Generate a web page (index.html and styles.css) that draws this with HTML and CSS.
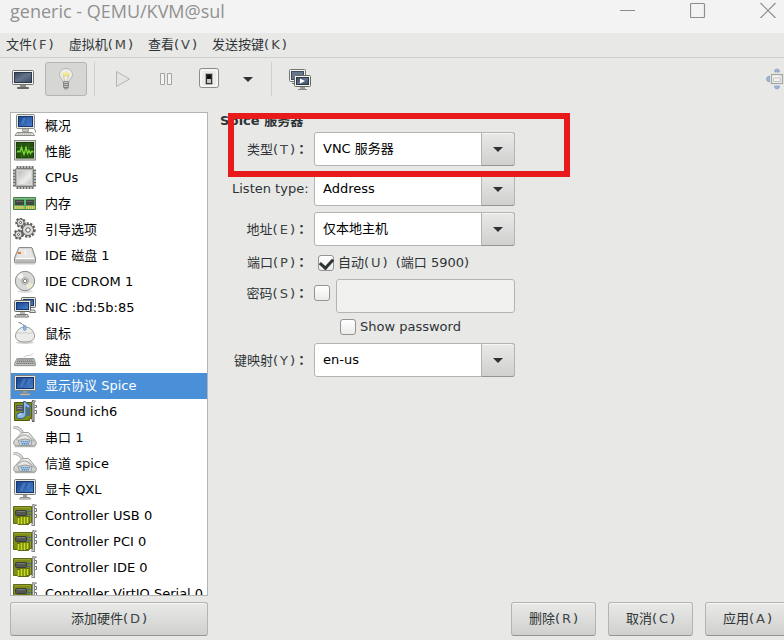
FILE: index.html
```html
<!DOCTYPE html>
<html lang="zh-CN">
  <head>
    <meta charset="UTF-8" />
    <meta name="viewport" content="width=device-width, initial-scale=1.0" />
    <title>generic - QEMU/KVM@sul</title>
    <link rel="stylesheet" href="styles.css">
  </head>
  <body>
    <!-- Icon definitions -->
    <svg class="defs" width="0" height="0" aria-hidden="true">
      <defs>
        <linearGradient id="blue" x1="0" y1="0" x2="1" y2="1">
          <stop offset="0" stop-color="#1d468c" />
          <stop offset="0.5" stop-color="#2f63b0" />
          <stop offset="1" stop-color="#4a80cc" />
        </linearGradient>
        <linearGradient id="slate" x1="0" y1="0" x2="1" y2="1">
          <stop offset="0" stop-color="#35455a" />
          <stop offset="0.5" stop-color="#63748c" />
          <stop offset="1" stop-color="#3a4960" />
        </linearGradient>
        <linearGradient id="metal" x1="0" y1="0" x2="1" y2="1">
          <stop offset="0" stop-color="#b9bab8" />
          <stop offset="0.6" stop-color="#ececea" />
          <stop offset="1" stop-color="#c4c5c3" />
        </linearGradient>
        <linearGradient id="shell" x1="0" y1="0" x2="0" y2="1">
          <stop offset="0" stop-color="#fafafa" />
          <stop offset="1" stop-color="#c9cac7" />
        </linearGradient>
        <symbol id="i-computer" viewBox="0 0 24 24">
          <rect x="3.500" y=".5" width="18" height="14" rx="1" fill="#e6e6e3" stroke="#8a8c86" />
          <rect x="5.500" y="2.500" width="14" height="10" fill="url(#blue)" stroke="#18366b" />
          <path d="M8 10l2-6h3l-3 6zM14 6l2-2-2 5z" fill="#6b9cdd" opacity=".45" />
          <path d="M9.500 15h6v2.500h-6z" fill="#c9cac7" stroke="#888a85" stroke-width=".7" />
          <path d="M4 18.500h15.500l2 3H2z" fill="#eeeeec" stroke="#8a8c86" />
          <path d="M4.500 20h14" stroke="#91938e" stroke-dasharray="1.500 .6" />
          <path d="M21 15.500q2.500 0 1.500 3" fill="none" stroke="#888a85" />
        </symbol>
        <symbol id="i-graph" viewBox="0 0 24 24">
          <rect x="1.500" y=".5" width="21" height="19.500" fill="#d3d7cf" stroke="#8b8e89" />
          <rect x="3.500" y="2.500" width="17" height="15.500" fill="#24520f" stroke="#1b3d0b" />
          <path d="M3 7.500h18M3 12.500h18M8.500 3v15M15.500 3v15" stroke="#376f1b" stroke-width=".8" />
          <path d="M4 11.500h3l1.500-4 2.500 7 2-7 1.500 6 1.500-3 1.500 3 1-2h2" fill="none" stroke="#79dc38" stroke-width="1.300" />
          <path d="M3 20.500h19" stroke="#bbb" />
        </symbol>
        <symbol id="i-cpu" viewBox="0 0 24 24">
          <path d="M3.500 1.500h17M3.500 21.500h17" stroke="#6f716d" stroke-width="3" stroke-dasharray="2 1" />
          <path d="M1.500 3.500v17M21.500 3.500v17" stroke="#6f716d" stroke-width="3" stroke-dasharray="2 1" />
          <rect x="2.500" y="2.500" width="18" height="18" rx="1" fill="#b4b5b2" stroke="#7b7d79" />
          <rect x="4.500" y="4.500" width="14" height="14" fill="url(#metal)" stroke="#d8d9d7" />
        </symbol>
        <symbol id="i-memory" viewBox="0 0 24 24">
          <path d="M.5 5.500h22v12H.5z" fill="#5c9e5e" stroke="#4a7f4f" />
          <path d="M1 6.500h21" stroke="#86b888" />
          <path d="M2 8h9v5H2zM13 8h8v5h-8z" fill="#42443f" />
          <path d="M3 9.500h7M14 9.500h6" stroke="#666864" />
          <path d="M12 6v7" stroke="#4ad065" stroke-width="1.500" />
          <path d="M1.500 15.500h10M13 15.500h9" stroke="#e7d85c" stroke-width="3" stroke-dasharray="1.400 .5" />
        </symbol>
        <symbol id="i-gears" viewBox="0 0 24 24">
          <g fill="none" stroke="#5f615d" stroke-dasharray="2.200 1.350">
            <circle cx="7.500" cy="4.500" r="4" stroke-width="2.500" />
            <circle cx="5.500" cy="16.500" r="4" stroke-width="2.500" />
            <circle cx="15" cy="12" r="6.500" stroke-width="2.500" />
          </g>
          <g fill="#dedfdc" stroke="#5f615d">
            <circle cx="7.500" cy="4.500" r="3.500" />
            <circle cx="5.500" cy="16.500" r="3.500" />
            <circle cx="15" cy="12" r="5.500" />
          </g>
          <g fill="#fff" stroke="#555753">
            <circle cx="7.500" cy="4.500" r="1" />
            <circle cx="5.500" cy="16.500" r="1" />
            <circle cx="15" cy="12" r="2.200" />
          </g>
        </symbol>
        <symbol id="i-disk" viewBox="0 0 24 24">
          <path d="M5.500 4q0-.5 1-.5h11.500q1 0 1.200.5L22.500 14v4q0 1-1 1h-19q-1 0-1-1v-4z" fill="#c8c9c6" stroke="#8b8d88" />
          <path d="M6.500 4.500h11.500L21 14H3z" fill="#e6e7e5" />
          <path d="M2.500 14.500h19" stroke="#fff" />
          <path d="M3 17h18" stroke="#a5a6a3" />
          <path d="M5 8h3v2H5z" fill="#e8782a" />
          <path d="M12 6l1 5" stroke="#fff" />
          <path d="M2 20h20" stroke="#ccc" />
        </symbol>
        <symbol id="i-cd" viewBox="0 0 24 24">
          <ellipse cx="12" cy="21.500" rx="8" ry="1.500" fill="#ddd" />
          <circle cx="12" cy="11" r="9.700" fill="#d9dad7" stroke="#8b8d88" />
          <path d="M12 11L4 7a9 9 0 0 1 5-4zM12 11l8 4a9 9 0 0 1-5 4z" fill="#f4f4f4" />
          <path d="M12 11l7 5-3 2z" fill="#efe7be" />
          <circle cx="12" cy="11" r="3.500" fill="#c6c7c4" stroke="#a0a29d" stroke-width=".7" />
          <circle cx="12" cy="11" r="1.700" fill="#fff" stroke="#858782" />
        </symbol>
        <symbol id="i-network" viewBox="0 0 24 24">
          <rect x="8.500" y="1.500" width="14" height="10" rx="1" fill="#e6e6e3" stroke="#666864" />
          <rect x="10.500" y="3.500" width="10" height="6" fill="url(#blue)" stroke="#18366b" />
          <path d="M17 12v2h4.500l1 2.500h-6" fill="#e6e6e3" stroke="#73756f" />
          <rect x="1.500" y="4.500" width="16" height="11" rx="1" fill="#e6e6e3" stroke="#666864" />
          <rect x="3.500" y="6.500" width="12" height="7" fill="url(#blue)" stroke="#18366b" />
          <path d="M7 16h5v2H7z" fill="#b5b6b3" />
          <path d="M3.500 18.500h11l1 2.500H1.500z" fill="#eeeeec" stroke="#73756f" />
          <path d="M4 19.700h9" stroke="#9a9c97" />
        </symbol>
        <symbol id="i-mouse" viewBox="0 0 24 24">
          <path d="M5.500 .5q3 .2 4 2 2.500 0 2.500 4" fill="none" stroke="#777975" />
          <ellipse cx="12" cy="20.500" rx="9" ry="1.500" fill="#d2d2d0" />
          <path d="M12 5c6 0 9.500 5 9.500 9 0 4-3.500 6-9.500 6s-9.500-2-9.500-6C2.500 10 6 5 12 5z" fill="#ebecea" stroke="#999b96" />
          <path d="M4 10.500q4 2 8 0 4 2 8 0" fill="none" stroke="#c5c6c3" stroke-width=".8" />
          <rect x="10.500" y="3.500" width="2.500" height="5" rx="1.200" fill="#8cb9eb" stroke="#5a8fcb" stroke-width=".7" />
        </symbol>
        <symbol id="i-keyboard" viewBox="0 0 24 24">
          <path d="M11 9.500c0-3 8-1 9-4" fill="none" stroke="#c9cac7" />
          <path d="M4 10.500h17l1.500 5v2H1.500v-2z" fill="#bfc0bd" stroke="#858782" stroke-width=".8" />
          <path d="M4.500 12h15.500M4 13.700h17M3.500 15.400h18" stroke="#6a6c68" stroke-dasharray="1.300 .6" />
          <path d="M2 17.700h20" stroke="#999b96" />
        </symbol>
        <symbol id="i-display" viewBox="0 0 24 24">
          <rect x="1.500" y="1.500" width="21" height="15" rx="1" fill="#e6e6e3" stroke="#7c7e78" />
          <rect x="3.500" y="3.500" width="17" height="11" fill="url(#blue)" stroke="#18366b" />
          <path d="M7 12l3-7h3l-4 8zM14 9l2-4h2l-3 6z" fill="#6b9cdd" opacity=".4" />
          <path d="M10 17h4v2h-4z" fill="#999b96" />
          <path d="M7.500 19.500h9l1 1.500h-11z" fill="#eeeeec" stroke="#8a8c86" />
        </symbol>
        <symbol id="i-card" viewBox="0 0 24 24">
          <path d="M.5 2.500h18v16h-3v2H5v-1H.5z" fill="#7f8c16" stroke="#5d681a" />
          <path d="M1.500 3.500h16v14" fill="none" stroke="#96a32a" />
          <path d="M4 12h13v8H4z" fill="#66720f" />
          <path d="M5.500 20v-6M8.500 20v-7M11.500 20v-7M14.500 19v-6" stroke="#c9dc20" stroke-width="1.800" />
          <rect x="2.500" y="6.500" width="11" height="5" rx="1" fill="#555753" stroke="#3a3c37" />
          <path d="M4 7.500h8" stroke="#7a7d75" />
          <path d="M14 7.500h4M14 10.500h4" stroke="#486b9a" stroke-width="1.500" />
          <path d="M23.500 .5h-1q-2 0-2 2v18h-2" fill="none" stroke="#858782" stroke-width="3" />
          <path d="M23.500 .5h-1q-2 0-2 2v18h-1.500" fill="none" stroke="#d3d7cf" />
          <path d="M22 4.500h1.500v3H22M22 10.500h1.500v3H22" fill="none" stroke="#73756f" />
        </symbol>
        <symbol id="i-sound" viewBox="0 0 24 24">
          <path d="M1.500 2.500h17v16h-2v2h-15z" fill="#7c9015" stroke="#4d5a0c" />
          <path d="M3 5h7v6H3z" fill="#555753" />
          <path d="M4 6.500h5M4 8.500h5" stroke="#888" />
          <path d="M14 9h3v7h-3z" fill="#4a6f8f" />
          <path d="M10.500 1.500h2q1 3 4.500 3.500v3.500q-3-.5-4-2V14q0 4-4.500 4.500-5 .5-5-2.500 0-3 4-3.500 1.500-.2 3 .3z" fill="#8fb5e0" stroke="#2f5a98" />
          <path d="M5.500 15.500q1-1.500 3-1.500" stroke="#e0ecfc" fill="none" />
          <path d="M22.500 .5q-2.500 0-2.500 2v18h-1" fill="none" stroke="#5f615c" stroke-width="3" />
          <path d="M22.500 .5q-2.500 0-2.500 2v18" fill="none" stroke="#d3d7cf" />
          <path d="M21.500 5.500h2v2h-2M21.500 10.500h2v3h-2" fill="none" stroke="#73756f" />
        </symbol>
        <symbol id="i-serial" viewBox="0 0 24 24">
          <path d="M0 1q7 0 10 7" fill="none" stroke="#a5a7a2" stroke-width="3" />
          <path d="M0 1q7 0 10 7" fill="none" stroke="#dedfdc" stroke-width="1.500" />
          <path d="M7 8.500q1-2 4-2h3q2 0 3 1.500l6 7.500q1 3-1 4.500H3.500Q0 20 1 15z" fill="url(#shell)" stroke="#999b96" />
          <path d="M3 14q6-7 12-4l7 6" fill="none" stroke="#b5b7b3" stroke-width="1.500" />
          <path d="M5 14.500q7-3 14 0l-1 5H7z" fill="#dcdddb" stroke="#999b96" />
          <path d="M7.500 15.700h10M8.500 17.900h8" stroke="#5f93cf" stroke-width="1.800" stroke-dasharray="1.600 .4" />
          <path d="M2 20.700h20" stroke="#a5a7a2" />
        </symbol>
      </defs>
    </svg>

    <div class="window">
      <header class="titlebar">
        <span class="title">generic - QEMU/KVM@sul</span>
        <div class="window-controls">
          <button type="button" aria-label="Minimize">
            <svg width="16" height="16" viewBox="0 0 16 16"><path d="M0 8.500h15" stroke="#8e8e8e" /></svg>
          </button>
          <button type="button" aria-label="Maximize">
            <svg width="16" height="16" viewBox="0 0 16 16"><rect x=".5" y="1.500" width="14" height="14" rx="1" fill="none" stroke="#8e8e8e" stroke-width="1.200" /></svg>
          </button>
          <button type="button" aria-label="Close">
            <svg width="16" height="16" viewBox="0 0 16 16"><path d="M.5 1l15 15M15.500 1l-15 15" stroke="#8e8e8e" stroke-width="1.200" /></svg>
          </button>
        </div>
      </header>

      <nav class="menubar">
        <button type="button">文件(<span class="key">F</span>)</button>
        <button type="button">虚拟机(<span class="key">M</span>)</button>
        <button type="button">查看(<span class="key">V</span>)</button>
        <button type="button">发送按键(<span class="key">K</span>)</button>
      </nav>

      <div class="toolbar">
        <button type="button" class="tool" aria-label="Console">
          <svg width="24" height="24" viewBox="0 0 24 24">
            <rect x="1.500" y="3.500" width="21" height="14" rx="1" fill="#f4f4f2" stroke="#73756f" />
            <rect x="3.500" y="5.500" width="17" height="10" fill="url(#slate)" stroke="#2b3747" />
            <path d="M9 18h6v2H9z" fill="#888a85" />
            <path d="M6.500 20.500h11v1h-11z" fill="#ddd" stroke="#666864" />
          </svg>
        </button>
        <button type="button" class="tool pressed" aria-label="Details">
          <svg width="24" height="24" viewBox="0 0 24 24">
            <path d="M12 1.500c4 0 6.500 3 6.500 6.300 0 3-3 4.200-3.500 7.200H9c-.5-3-3.500-4.200-3.500-7.200C5.500 4.500 8 1.500 12 1.500z" fill="#ecece8" stroke="#b5b6b1" />
            <path d="M8 6.500q4-2 8 0-1 3-3 3h-2q-2 0-3-3z" fill="#f3e98c" />
            <path d="M11 15l-2-6.500 2 1 1-1 1 1 2-1L13 15" fill="none" stroke="#c5c0a0" stroke-width=".7" />
            <path d="M9.500 14.500h5v6l-1.500 1.500h-2l-1.500-1.500z" fill="#c6c7c4" stroke="#8d8f89" />
            <path d="M9 16.500h6M9 18.500h6M10 20.500h4" stroke="#7d7f7a" />
          </svg>
        </button>
        <span class="separator"></span>
        <button type="button" class="tool" aria-label="Run" disabled>
          <svg width="24" height="24" viewBox="0 0 24 24"><path d="M5.500 4.500v15l13-7.500z" fill="#e4e4e2" stroke="#b4b6b2" /></svg>
        </button>
        <button type="button" class="tool" aria-label="Pause">
          <svg width="24" height="24" viewBox="0 0 24 24"><path d="M6.500 6.500h4v11h-4zM13.500 6.500h4v11h-4z" fill="#f2f4f0" stroke="#a3a5a1" /></svg>
        </button>
        <button type="button" class="tool" aria-label="Shut down">
          <svg width="24" height="24" viewBox="0 0 24 24">
            <rect x="2.500" y="1.500" width="19" height="19" rx="2" fill="#ebebe9" stroke="#8b8d88" />
            <rect x="4" y="3" width="16" height="16" rx="1" fill="none" stroke="#fff" />
            <rect x="8.500" y="6.500" width="7" height="11" rx="1" fill="#303230" stroke="#b6b7b4" />
            <path d="M10 12h4v4h-4z" fill="#c7c7c5" />
            <path d="M10 8h4v4h-4z" fill="#111" />
          </svg>
        </button>
        <button type="button" class="tool narrow" aria-label="Shut down options"><span class="arrow"></span></button>
        <span class="separator"></span>
        <button type="button" class="tool" aria-label="Snapshots">
          <svg width="24" height="24" viewBox="0 0 24 24">
            <rect x="1.500" y="2.500" width="16" height="12" rx="1" fill="#f4f4f2" stroke="#73756f" />
            <rect x="3.500" y="4.500" width="12" height="8" fill="#65758a" stroke="#3d4c5f" />
            <path d="M4 16.500h4" stroke="#73756f" />
            <rect x="6.500" y="8.500" width="16" height="11" rx="1" fill="#f4f4f2" stroke="#666864" />
            <rect x="8.500" y="10.500" width="12" height="7" fill="url(#slate)" stroke="#2b3747" />
            <path d="M12 11.500v5l5-2.500z" fill="#fff" />
            <path d="M12 20h5v2h-5z" fill="#999b96" />
            <path d="M10 22.500h9" stroke="#85878a" />
          </svg>
        </button>
        <button type="button" class="tool fullscreen" aria-label="Fullscreen">
          <svg width="24" height="24" viewBox="0 0 24 24">
            <g fill="#9fb5d6" stroke="#8aa2c8" stroke-width=".8">
              <path d="M9.500 5q0-3 2.500-3t2.500 3zM9.500 19q0 3 2.500 3t2.500-3zM4.500 9q-3 .5-3 3t3 3zM19.500 9q3 .5 3 3t-3 3z" />
            </g>
            <rect x="6.500" y="7.500" width="11" height="9" fill="#f2f2f0" stroke="#a4a6a1" stroke-width="1.200" />
            <path d="M8.500 11h7v3.500h-7zM14.500 9h2" fill="none" stroke="#c5c6c3" />
          </svg>
        </button>
      </div>

      <main class="body">
        <aside class="sidebar">
          <ul class="hardware">
            <li><svg><use href="#i-computer" /></svg>概况</li>
            <li><svg><use href="#i-graph" /></svg>性能</li>
            <li><svg><use href="#i-cpu" /></svg>CPUs</li>
            <li><svg><use href="#i-memory" /></svg>内存</li>
            <li><svg><use href="#i-gears" /></svg>引导选项</li>
            <li><svg><use href="#i-disk" /></svg>IDE 磁盘 1</li>
            <li><svg><use href="#i-cd" /></svg>IDE CDROM 1</li>
            <li><svg><use href="#i-network" /></svg>NIC :bd:5b:85</li>
            <li><svg><use href="#i-mouse" /></svg>鼠标</li>
            <li><svg><use href="#i-keyboard" /></svg>键盘</li>
            <li class="selected"><svg><use href="#i-display" /></svg>显示协议 Spice</li>
            <li><svg><use href="#i-sound" /></svg>Sound ich6</li>
            <li><svg><use href="#i-serial" /></svg>串口 1</li>
            <li><svg><use href="#i-serial" /></svg>信道 spice</li>
            <li><svg><use href="#i-display" /></svg>显卡 QXL</li>
            <li><svg><use href="#i-card" /></svg>Controller USB 0</li>
            <li><svg><use href="#i-card" /></svg>Controller PCI 0</li>
            <li><svg><use href="#i-card" /></svg>Controller IDE 0</li>
            <li><svg><use href="#i-card" /></svg>Controller VirtIO Serial 0</li>
          </ul>
          <button type="button" class="btn">添加硬件(<span class="key">D</span>)</button>
        </aside>

        <section class="details">
          <h2>Spice 服务器</h2>
          <form class="form">
            <label for="type">类型(<span class="key">T</span>)<span class="colon" lang="zh-TW">：</span></label>
            <div class="combo">
              <select id="type"><option>VNC 服务器</option><option>Spice 服务器</option></select>
              <span class="combo-button"><span class="arrow"></span></span>
            </div>

            <label for="listen">Listen type:</label>
            <div class="combo">
              <select id="listen"><option>Address</option></select>
              <span class="combo-button"><span class="arrow"></span></span>
            </div>

            <label for="address">地址(<span class="key">E</span>)<span class="colon" lang="zh-TW">：</span></label>
            <div class="combo">
              <select id="address"><option>仅本地主机</option></select>
              <span class="combo-button"><span class="arrow"></span></span>
            </div>

            <label for="port">端口(<span class="key">P</span>)<span class="colon" lang="zh-TW">：</span></label>
            <div class="check port">
              <input type="checkbox" id="port" checked />
              <label for="port">自动(<span class="key">U</span>)<span class="port-number">(端口 5900)</span></label>
            </div>

            <label for="use-password" class="password-label">密码(<span class="key">S</span>)<span class="colon" lang="zh-TW">：</span></label>
            <div class="password">
              <input type="checkbox" id="use-password" />
              <input type="password" class="entry" aria-label="密码" disabled />
              <div class="check show">
                <input type="checkbox" id="show" />
                <label for="show">Show password</label>
              </div>
            </div>

            <label for="keymap">键映射(<span class="key">Y</span>)<span class="colon" lang="zh-TW">：</span></label>
            <div class="combo">
              <select id="keymap"><option>en-us</option></select>
              <span class="combo-button"><span class="arrow"></span></span>
            </div>
          </form>
          <div class="highlight"></div>

          <footer class="actions">
            <button type="button" class="btn">删除(<span class="key">R</span>)</button>
            <button type="button" class="btn">取消(<span class="key">C</span>)</button>
            <button type="button" class="btn">应用(<span class="key">A</span>)</button>
          </footer>
        </section>
      </main>
    </div>
  </body>
</html>
```
FILE: styles.css
```css
* {
  box-sizing: border-box;
}
body {
  margin: 0;
  background: #e8e8e6;
  color: #2e3436;
  font: 13px/18px "DejaVu Sans", "Noto Sans CJK SC", sans-serif;
}
button,
input,
select {
  font: inherit;
  color: inherit;
}
button {
  margin: 0;
  padding: 0;
  border: 0;
  background: none;
}
.defs {
  position: absolute;
}
.window {
  display: flex;
  flex-direction: column;
  height: 100vh;
  overflow: hidden;
}

/* Title bar */
.titlebar {
  display: flex;
  justify-content: space-between;
  flex: none;
  height: 33px;
  padding-left: 10px;
  background: #f3f3f3;
}
.title {
  color: #919191;
  font: 18px/22px "Open Sans", sans-serif;
}
.window-controls {
  display: flex;
  align-items: flex-start;
  gap: 54px;
  padding: 2px 8px 0 0;
}
.window-controls button,
.tool svg {
  display: block;
}
.window-controls svg {
  display: block;
}

/* Menu and toolbar */
.menubar {
  display: flex;
  flex: none;
  gap: 15px;
  height: 25px;
  padding: 0 6px;
  border-bottom: 1px solid #cfcfcd;
}
.key {
  padding: 0 2px;
  color: #3f4644;
}
.toolbar {
  display: flex;
  align-items: center;
  flex: none;
  gap: 1px;
  padding: 4px 2px;
}
.tool {
  display: flex;
  align-items: center;
  justify-content: center;
  flex: none;
  width: 42px;
  height: 34px;
  border: 1px solid transparent;
  border-radius: 3px;
}
.tool.pressed {
  border-color: #b4b4b2;
  background: #d6d6d4;
}
.tool.narrow {
  width: 33px;
}
.fullscreen {
  margin-left: auto;
  margin-right: -16px;
}
.separator {
  width: 1px;
  height: 34px;
  margin: 0 6px;
  background: #cfcfcd;
}
.arrow {
  border: 5px solid transparent;
  border-top-color: #2e3436;
  border-bottom: 0;
}

/* Hardware list */
.body {
  display: flex;
  flex: 1;
  gap: 12px;
  min-height: 0;
  padding: 12px 0 4px 10px;
}
.sidebar {
  display: flex;
  flex-direction: column;
  flex: 0 0 198px;
  gap: 6px;
}
.hardware {
  flex: 1;
  min-height: 0;
  margin: 0;
  padding: 0;
  overflow: hidden;
  border: 1px solid #b4b4b2;
  background: #fff;
  color: #000;
  list-style: none;
}
.hardware li {
  display: flex;
  align-items: center;
  gap: 8px;
  height: 26px;
  padding-left: 2px;
  white-space: nowrap;
}
.hardware svg {
  flex: none;
  width: 24px;
  height: 24px;
}
.hardware .selected {
  background: #4a90d9;
  color: #fff;
}
.btn {
  height: 34px;
  border: 1px solid #b4b4b2;
  border-bottom-color: #949492;
  border-radius: 3px;
  background: linear-gradient(#e9e9e7, #d0d0ce);
  box-shadow: inset 0 1px #f6f6f5;
}

/* Details panel */
.details {
  display: flex;
  flex-direction: column;
  flex: 1;
  position: relative;
}
.details h2 {
  margin: 0 0 2px;
  font-size: 13px;
  line-height: 18px;
}
.form {
  display: grid;
  grid-template-columns: 76px 201px;
  align-items: center;
  justify-content: start;
  gap: 6px;
  padding-left: 12px;
}
.form > label {
  text-align: right;
  white-space: nowrap;
}
.colon {
  font-family: "Noto Sans CJK TC", sans-serif;
  font-weight: bold;
}
.combo {
  position: relative;
  height: 34px;
}
.combo select {
  width: 100%;
  height: 100%;
  padding: 0 40px 0 8px;
  appearance: none;
  border: 1px solid #b4b4b2;
  border-radius: 3px;
  background: #fff;
  color: #000;
}
.combo-button {
  display: flex;
  align-items: center;
  justify-content: center;
  position: absolute;
  top: 0;
  right: 0;
  width: 34px;
  height: 34px;
  border: 1px solid #b4b4b2;
  border-bottom-color: #949492;
  border-radius: 0 3px 3px 0;
  background: linear-gradient(#e9e9e7, #d0d0ce);
  box-shadow: inset 0 1px #f6f6f5;
  pointer-events: none;
}
input[type="checkbox"] {
  display: grid;
  place-items: center;
  width: 16px;
  height: 16px;
  margin: 0;
  appearance: none;
  border: 1px solid #949492;
  border-radius: 3px;
  background: linear-gradient(#fff, #ececea);
}
input[type="checkbox"]:checked::before {
  content: "";
  width: 6px;
  height: 10px;
  margin-bottom: 4px;
  border: solid #2e3436;
  border-width: 0 3px 3px 0;
  transform: rotate(42deg);
}
.check {
  display: flex;
  align-items: center;
  gap: 4px;
  white-space: nowrap;
}
.port {
  height: 21px;
  padding-left: 4px;
}
.port-number {
  padding-left: 8px;
}
.form .password-label {
  align-self: start;
  padding-top: 5px;
}
.password {
  display: grid;
  grid-template-columns: 16px 1fr;
  column-gap: 6px;
  row-gap: 4px;
}
.password > input[type="checkbox"] {
  margin-top: 6px;
}
.entry {
  width: 100%;
  height: 34px;
  padding: 0 8px;
  border: 1px solid #b4b4b2;
  border-radius: 3px;
  background: #f0f0ef;
}
.show {
  grid-column: 2;
  height: 20px;
  padding-left: 4px;
}

/* Red frame round the server type */
.highlight {
  position: absolute;
  top: 1px;
  left: 8px;
  width: 342px;
  height: 64px;
  border: 6px solid #e81a1c;
  pointer-events: none;
}
.actions {
  display: flex;
  justify-content: flex-end;
  gap: 12px;
  margin-top: auto;
  margin-right: -6px;
}
.actions .btn {
  width: 85px;
}
```
